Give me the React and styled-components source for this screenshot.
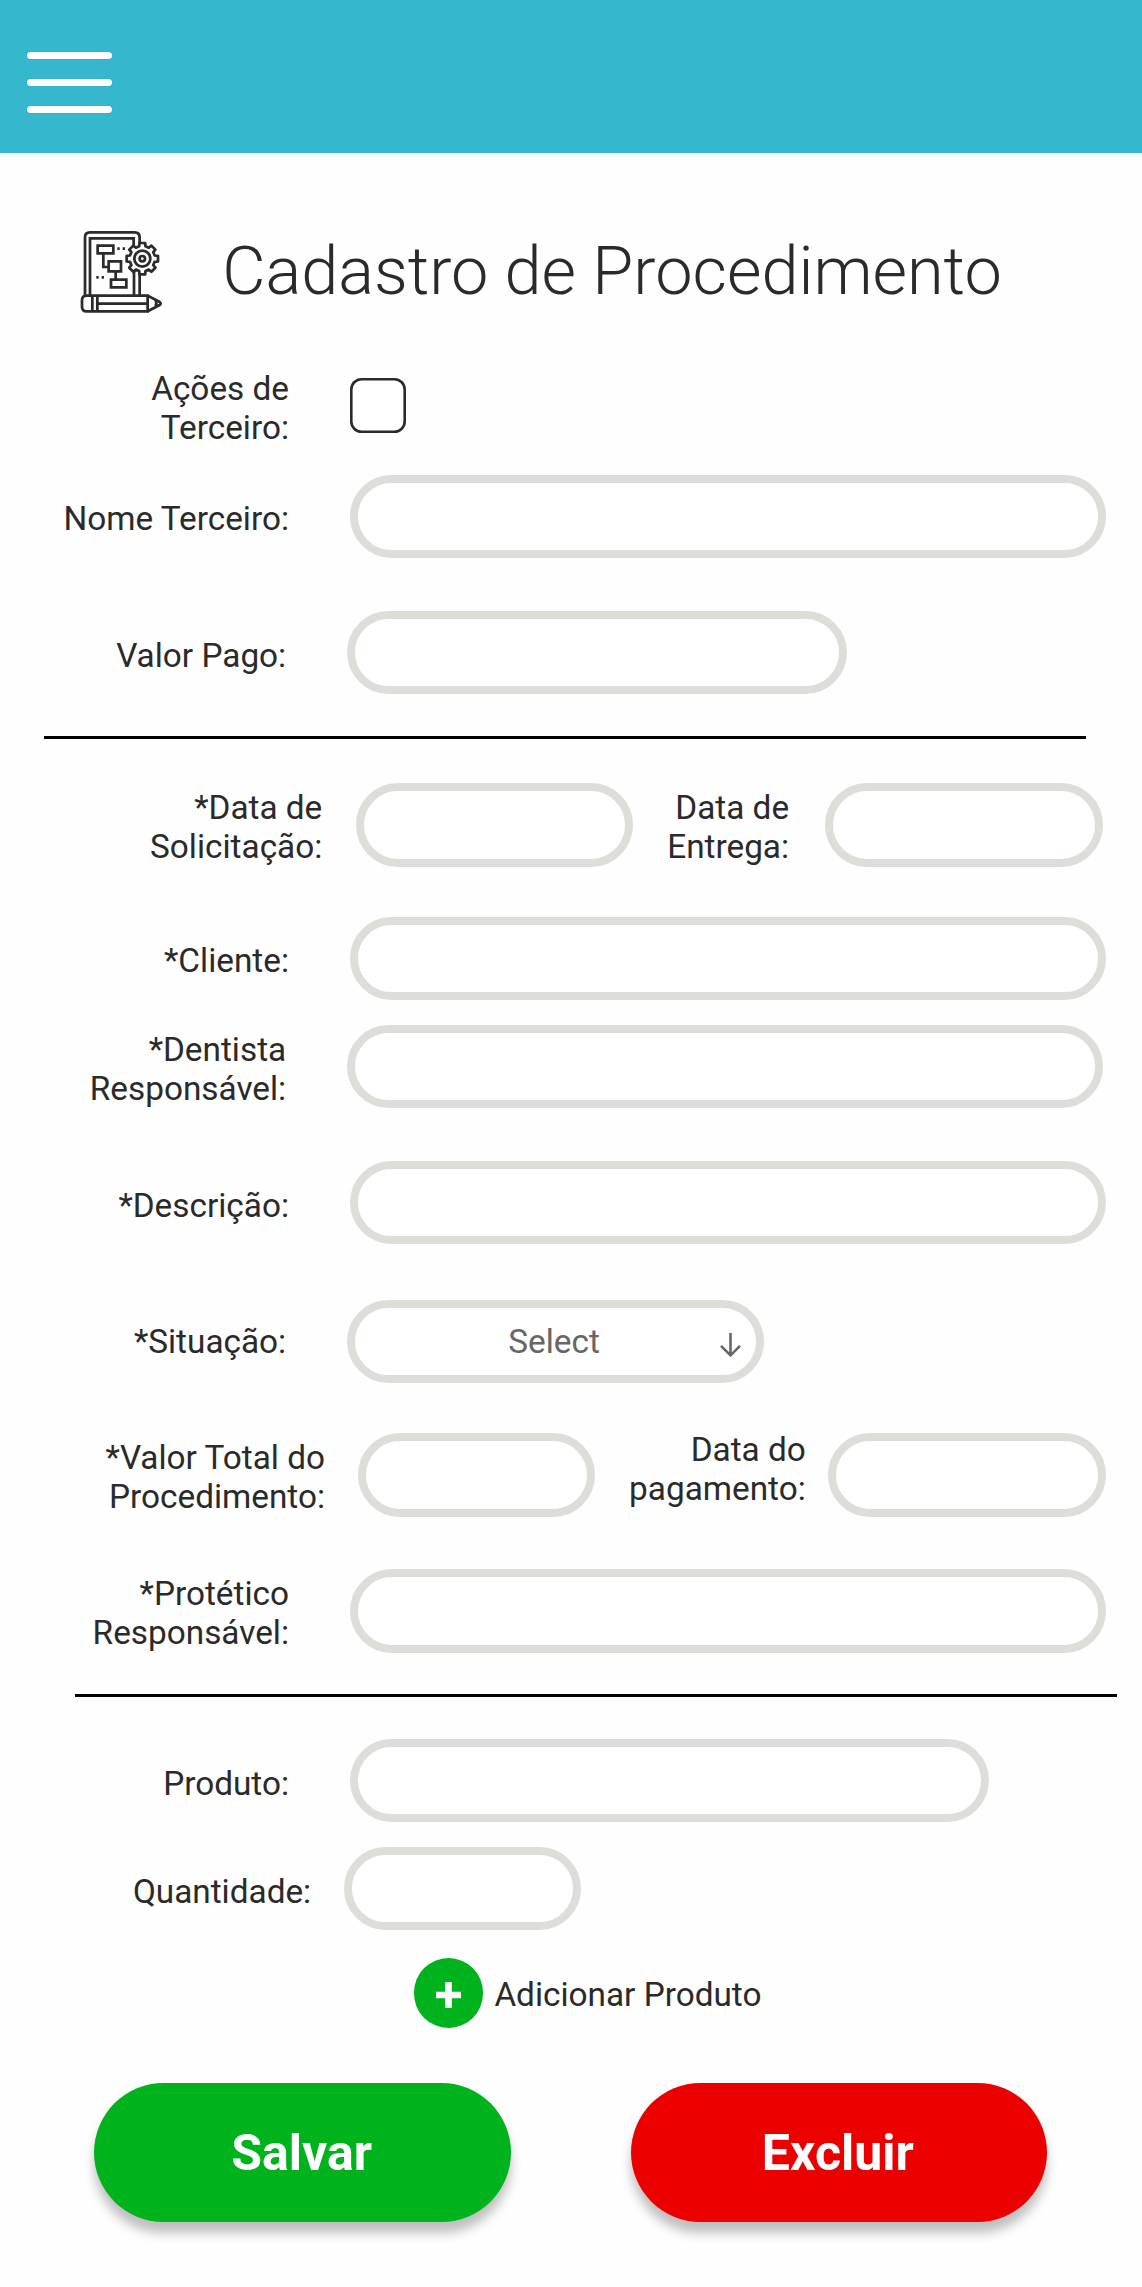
import React from "react";
import styled, { createGlobalStyle } from "styled-components";

const GlobalStyle = createGlobalStyle`
  *, *::before, *::after { box-sizing: border-box; }
  body {
    margin: 0;
    background: #fefefe;
    color: #2a2a2a;
    font-family: Roboto, "Liberation Sans", sans-serif;
  }
`;

const Page = styled.div`
  width: 1142px;
  height: 2287px;
  overflow: hidden;
  display: flex;
  flex-direction: column;
`;

const Header = styled.header`
  flex: none;
  height: 152.6px;
  padding: 51.7px 26.8px 0;
  background: #35b7cd;
`;

const MenuButton = styled.button`
  display: flex;
  flex-direction: column;
  gap: 20.3px;
  width: 85.2px;
  padding: 0;
  border: 0;
  background: none;
`;

const MenuBar = styled.span`
  height: 7px;
  border-radius: 4px;
  background: #fff;
  box-shadow: 0 0 1px rgba(0, 0, 0, 0.25);
`;

const TitleBar = styled.div`
  flex: none;
  display: flex;
  align-items: flex-start;
  gap: 59.3px;
  height: 139.4px;
  margin-top: 77px;
  padding-left: 80.2px;
`;

const Title = styled.h1`
  margin: 2px 0 0;
  font-size: 66.67px;
  font-weight: 300;
  line-height: 78px;
  white-space: nowrap;
`;

const Form = styled.form`
  display: flex;
  flex-direction: column;
`;

const Row = styled.div`
  display: flex;
  align-items: flex-start;
  height: ${(p) => p.$height ?? 83.4}px;
  margin-bottom: ${(p) => p.$after}px;
`;

const Label = styled.label`
  flex: none;
  width: ${(p) => p.$width}px;
  margin-top: ${(p) => p.$drop}px;
  font-size: 33.34px;
  line-height: 39px;
  text-align: right;
  white-space: pre-line;
`;

const Input = styled.input`
  flex: none;
  width: ${(p) => p.$width}px;
  height: 83.4px;
  margin: 0 0 0 ${(p) => p.$gap}px;
  padding: 0 34px;
  border: 8px solid #dddeda;
  border-radius: 42px;
  background: #fff;
  color: inherit;
  font: inherit;
  font-size: 33.34px;
  outline: none;
`;

const Select = styled.button`
  flex: none;
  display: flex;
  align-items: flex-start;
  width: 416.8px;
  height: 83.4px;
  margin: 0 0 0 61.3px;
  padding: 14px 15.6px 0 0;
  border: 8px solid #dddeda;
  border-radius: 42px;
  background: #fff;
  color: #666;
  font-family: inherit;
  font-size: 33.34px;
  line-height: 39px;
`;

const SelectValue = styled.span`
  flex: 1;
  padding-left: 33px;
  text-align: center;
`;

const SelectArrow = styled.svg`
  flex: none;
  width: 21px;
  height: 24px;
  margin-top: 11px;
`;

const Checkbox = styled.input`
  appearance: none;
  flex: none;
  width: 55.6px;
  height: 55.6px;
  margin: 8.8px 0 0 61.2px;
  border-radius: 11.5px;
  background: #fff;
  box-shadow: inset 0 0 0 2.6px #2a2a2a;
`;

const Divider = styled.hr`
  width: 1042px;
  height: 2.8px;
  margin: 0 0 ${(p) => p.$after}px ${(p) => p.$left}px;
  border: 0;
  background: #000;
`;

const AddProduct = styled.button`
  display: flex;
  align-items: center;
  gap: 11.2px;
  height: 69.5px;
  margin: 0 0 55.7px;
  padding: 0 0 0 413.7px;
  border: 0;
  background: none;
  color: inherit;
  font-family: inherit;
  font-size: 33.34px;
  line-height: 39px;
`;

const AddBadge = styled.span`
  display: flex;
  align-items: center;
  justify-content: center;
  width: 69.5px;
  height: 69.5px;
  padding-top: 3.4px;
  border-radius: 50%;
  background: #00b31d;
`;

const AddText = styled.span`
  padding-top: 3px;
`;

const Actions = styled.div`
  display: flex;
  gap: 119.4px;
  padding-left: 94.4px;
`;

const ActionButton = styled.button`
  width: 416.8px;
  height: 139px;
  padding: 1px 2.4px 0 0;
  border: 0;
  border-radius: 70px;
  background: ${(p) => (p.$danger ? "#eb0000" : "#00b31d")};
  box-shadow: 0 11px 11px rgba(0, 0, 0, 0.25);
  color: #fff;
  font-family: inherit;
  font-size: 50px;
  font-weight: 700;
  line-height: 59px;
`;

const ProcedureSvg = styled.svg`
  flex: none;
  width: 82.67px;
  height: 83.33px;
`;

const GEAR = { x: 249, y: 146, root: 37, tip: 47, half: 8.5 };

const gearPath = () => {
  const points = [];
  for (let i = 0; i < 8; i += 1) {
    const a = (i * Math.PI) / 4;
    const corners = [
      [GEAR.root, -GEAR.half - 1],
      [GEAR.tip, -GEAR.half],
      [GEAR.tip, GEAR.half],
      [GEAR.root, GEAR.half + 1],
    ];
    corners.forEach(([r, t]) => {
      const x = GEAR.x + r * Math.cos(a) - t * Math.sin(a);
      const y = GEAR.y + r * Math.sin(a) + t * Math.cos(a);
      points.push(`${x.toFixed(1)} ${y.toFixed(1)}`);
    });
  }
  return `M${points.join("L")}Z`;
};

const ProcedureIcon = () => (
  <ProcedureSvg viewBox="62 60 248 250" fill="none" stroke="#2b2b2b" strokeWidth="8.2" aria-hidden="true">
    <path d="M77 256V82Q77 67 92 67H226Q241 67 241 82V101" />
    <path d="M92 256V85H223V106" />
    <path d="M224 256V187Q224 183 229 183M241 256V190" />
    <path d={gearPath()} fill="#fefefe" strokeLinejoin="round" />
    <circle cx="249" cy="146" r="24" />
    <circle cx="249" cy="146" r="8" />
    <path d="M115 107H162V130H115ZM148 154H185V184H148ZM155 209H201V232H155Z" />
    <path d="M132 130V171H148M169 184V209" />
    <path d="M174 116H181M190 116H197M111 202H118M127 202H134" />
    <path d="M265 257H82Q68 257 68 271V290Q68 304 82 304H265ZM99 257V304M114 257V304M114 281H265" />
    <path d="M265 257L301 276Q307 281 301 285L265 304M289 269Q293 281 289 292" />
  </ProcedureSvg>
);

export default function App() {
  return (
    <>
      <GlobalStyle />
      <Page>
        <Header>
          <MenuButton type="button" aria-label="Menu">
            <MenuBar />
            <MenuBar />
            <MenuBar />
          </MenuButton>
        </Header>
        <TitleBar>
          <ProcedureIcon />
          <Title>Cadastro de Procedimento</Title>
        </TitleBar>
        <Form onSubmit={(e) => e.preventDefault()}>
          <Row $height={78} $after={28}>
            <Label $width={289} $drop={0}>{"Ações de\nTerceiro:"}</Label>
            <Checkbox type="checkbox" />
          </Row>
          <Row $after={52.6}>
            <Label $width={289} $drop={24.4}>Nome Terceiro:</Label>
            <Input $gap={61.1} $width={755.7} />
          </Row>
          <Row $after={41.6}>
            <Label $width={286.2} $drop={24.6}>Valor Pago:</Label>
            <Input $gap={61.1} $width={500.1} />
          </Row>
          <Divider $left={44.4} $after={44.4} />
          <Row $after={50}>
            <Label $width={322.3} $drop={4.9}>{"*Data de\nSolicitação:"}</Label>
            <Input $gap={33.4} $width={277.8} />
            <Label $width={155.6} $drop={4.9}>{"Data de\nEntrega:"}</Label>
            <Input $gap={36.1} $width={277.8} />
          </Row>
          <Row $after={25}>
            <Label $width={289} $drop={24.6}>*Cliente:</Label>
            <Input $gap={61.1} $width={755.7} />
          </Row>
          <Row $after={52.6}>
            <Label $width={286.2} $drop={5.2}>{"*Dentista\nResponsável:"}</Label>
            <Input $gap={61.1} $width={755.7} />
          </Row>
          <Row $after={55.6}>
            <Label $width={289} $drop={24.6}>*Descrição:</Label>
            <Input $gap={61.1} $width={755.7} />
          </Row>
          <Row $after={50}>
            <Label $width={286.2} $drop={22}>*Situação:</Label>
            <Select type="button">
              <SelectValue>Select</SelectValue>
              <SelectArrow viewBox="0 0 21 24" fill="none" stroke="#666" strokeWidth="2.6">
                <path d="M10.5 0V22.4M1 12.8L10.5 22.3L20 12.8" />
              </SelectArrow>
            </Select>
          </Row>
          <Row $after={52.6}>
            <Label $width={325} $drop={4.9}>{"*Valor Total do\nProcedimento:"}</Label>
            <Input $gap={33.4} $width={236.2} />
            <Label $width={211.2} $drop={-3}>{"Data do\npagamento:"}</Label>
            <Input $gap={22.2} $width={277.8} />
          </Row>
          <Row $after={41.6}>
            <Label $width={289} $drop={5.2}>{"*Protético\nResponsável:"}</Label>
            <Input $gap={61.1} $width={755.7} />
          </Row>
          <Divider $left={75} $after={41.7} />
          <Row $after={24.9}>
            <Label $width={289} $drop={25}>Produto:</Label>
            <Input $gap={61.1} $width={639.1} />
          </Row>
          <Row $after={27.8}>
            <Label $width={311.2} $drop={24.8}>Quantidade:</Label>
            <Input $gap={33.3} $width={236.2} />
          </Row>
          <AddProduct type="button">
            <AddBadge>
              <svg width="25" height="26" viewBox="0 0 25 26" fill="none" stroke="#fff" strokeWidth="6.6">
                <path d="M12.5 0V26M0 13H25" />
              </svg>
            </AddBadge>
            <AddText>Adicionar Produto</AddText>
          </AddProduct>
          <Actions>
            <ActionButton type="submit">Salvar</ActionButton>
            <ActionButton type="button" $danger>Excluir</ActionButton>
          </Actions>
        </Form>
      </Page>
    </>
  );
}
